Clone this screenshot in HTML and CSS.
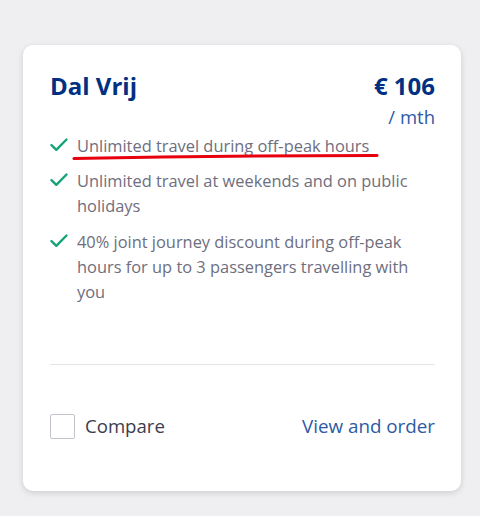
FILE: index.html
```html
<!DOCTYPE html>
<html lang="en">
<head>
<meta charset="utf-8">
<link rel="stylesheet" href="styles.css">
</head>
<body>
<div class="card">
  <div class="header">
    <h2 class="title">Dal Vrij</h2>
    <div class="price">
      <div class="amount">€ 106</div>
      <div class="period">/ mth</div>
    </div>
  </div>
  <ul class="features">
    <li class="feature highlighted">
      <svg class="check" viewBox="0 0 18 14" width="18" height="14"><path d="M1.5 7.2 L6.3 11.8 L16.5 1.5" fill="none" stroke="#15a37b" stroke-width="2.4" stroke-linecap="round" stroke-linejoin="round"/></svg>
      <span>Unlimited travel during off-peak hours</span>
      <svg class="scribble" viewBox="0 0 310 10" width="310" height="10"><path d="M3 6.6 Q 140 3.6 306 3.4" fill="none" stroke="#e8000f" stroke-width="3" stroke-linecap="round"/></svg>
    </li>
    <li class="feature">
      <svg class="check" viewBox="0 0 18 14" width="18" height="14"><path d="M1.5 7.2 L6.3 11.8 L16.5 1.5" fill="none" stroke="#15a37b" stroke-width="2.4" stroke-linecap="round" stroke-linejoin="round"/></svg>
      <span>Unlimited travel at weekends and on public holidays</span>
    </li>
    <li class="feature">
      <svg class="check" viewBox="0 0 18 14" width="18" height="14"><path d="M1.5 7.2 L6.3 11.8 L16.5 1.5" fill="none" stroke="#15a37b" stroke-width="2.4" stroke-linecap="round" stroke-linejoin="round"/></svg>
      <span>40% joint journey discount during off-peak hours for up to 3 passengers travelling with you</span>
    </li>
  </ul>
  <hr class="divider">
  <div class="footer">
    <label class="compare"><span class="box"></span><span>Compare</span></label>
    <a class="order" href="#">View and order</a>
  </div>
</div>
</body>
</html>
```
FILE: styles.css
```css
* { box-sizing: border-box; }
html, body { margin: 0; padding: 0; }
body {
  background: #efeff2;
  font-family: "Open Sans", "Noto Sans", sans-serif;
  padding: 45px 19px 25px 23px;
  height: 516px;
}
.card {
  width: 438px;
  height: 446px;
  background: #fff;
  border-radius: 10px;
  box-shadow: 0 2px 6px rgba(0, 0, 0, 0.14);
  padding: 25px 26px 0 27px;
  display: flex;
  flex-direction: column;
}
.header {
  display: flex;
  justify-content: space-between;
  align-items: flex-start;
}
.title {
  margin: 0;
  font-size: 24px;
  line-height: 32px;
  font-weight: 700;
  color: #003082;
}
.price { text-align: right; }
.amount {
  font-size: 24px;
  line-height: 32px;
  font-weight: 700;
  color: #003082;
}
.period {
  margin-top: 3px;
  font-size: 18.5px;
  line-height: 24px;
  color: #2d5aa5;
}
.features {
  list-style: none;
  margin: 3.5px 0 0;
  padding: 0;
  display: flex;
  flex-direction: column;
  gap: 10.5px;
}
.feature {
  position: relative;
  display: flex;
  gap: 9px;
  font-size: 16.4px;
  line-height: 25px;
  color: #6e6e7e;
}
.check {
  flex: none;
  margin-top: 5px;
}
.scribble {
  position: absolute;
  left: 21px;
  top: 19px;
}
.divider {
  margin: 60px 0 0;
  border: 0;
  border-top: 1px solid #e4e4e8;
  height: 0;
}
.footer {
  display: flex;
  justify-content: space-between;
  align-items: center;
  margin-top: 49px;
}
.compare {
  display: flex;
  align-items: center;
  gap: 10px;
  font-size: 18.6px;
  line-height: 24px;
  color: #3c3c4e;
}
.box {
  width: 25px;
  height: 25px;
  border: 1px solid #c4c4cc;
  border-radius: 2px;
  background: #fff;
}
.order {
  font-size: 18.8px;
  line-height: 24px;
  color: #2d5aa5;
  text-decoration: none;
}
```
